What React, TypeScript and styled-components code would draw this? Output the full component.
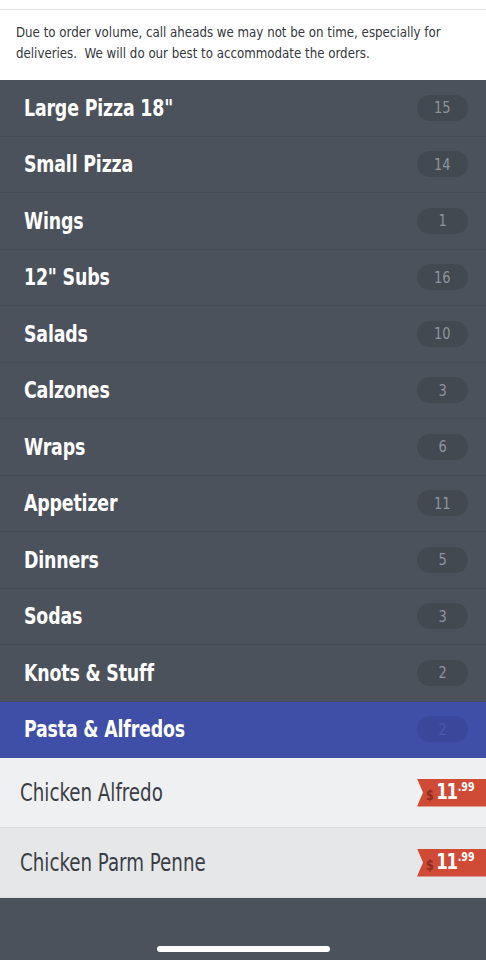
import React from "react";
import styled, { createGlobalStyle } from "styled-components";

const Global = createGlobalStyle`
  html, body { margin: 0; padding: 0; background: #4b525c; }
  #root { min-height: 960px; }
  * { box-sizing: border-box; }
`;

const FONT = `"DejaVu Sans Condensed", "DejaVu Sans", sans-serif`;

const Page = styled.div`
  width: 486px;
  min-height: 960px;
  display: flex;
  flex-direction: column;
  background: #4b525c;
  font-family: ${FONT};
`;

const TopStrip = styled.div`
  height: 10px;
  background: #fff;
  border-bottom: 1px solid #e4e4e6;
`;

const Notice = styled.div`
  background: #fff;
  padding: 12px 0 0 16px;
  height: 70px;
  overflow: hidden;
`;

const NoticeText = styled.p`
  margin: 0;
  width: 488px;
  font-size: 14px;
  line-height: 21px;
  color: #34373c;
  transform: scaleX(0.94);
  transform-origin: left top;
`;

const Category = styled.div<{ $active?: boolean }>`
  height: 56.5px;
  display: flex;
  align-items: center;
  justify-content: space-between;
  padding: 0 18px 0 24px;
  background: ${(p) => (p.$active ? "#3f4ea7" : "#4b525c")};
  border-bottom: 1px solid ${(p) => (p.$active ? "#3f4ea7" : "#464c55")};
`;

const CatName = styled.span`
  display: inline-block;
  color: #fff;
  font-size: 23px;
  font-weight: 700;
  letter-spacing: -0.2px;
  transform: scaleX(0.84);
  transform-origin: left center;
  white-space: nowrap;
`;

const Badge = styled.span<{ $active?: boolean }>`
  width: 51px;
  height: 26px;
  border-radius: 13px;
  display: flex;
  align-items: center;
  justify-content: center;
  background: ${(p) => (p.$active ? "#3a489c" : "#434950")};
  color: ${(p) => (p.$active ? "#4a59b0" : "#8e949c")};
`;

const BadgeNum = styled.span`
  display: inline-block;
  font-size: 16px;
  transform: scaleX(0.9);
`;

const Item = styled.div<{ $alt?: boolean }>`
  height: 70px;
  display: flex;
  align-items: center;
  justify-content: space-between;
  padding-left: 20px;
  background: ${(p) => (p.$alt ? "#e6e7e9" : "#eff0f2")};
  border-bottom: 1px solid #dddee0;
`;

const ItemName = styled.span`
  display: inline-block;
  font-size: 24px;
  color: #3a3e44;
  transform: scaleX(0.845);
  transform-origin: left center;
  white-space: nowrap;
`;

const PriceTag = styled.span`
  width: 69px;
  height: 28px;
  background: #d04b35;
  clip-path: polygon(0 0, 100% 0, 100% 100%, 0 100%, 6px 50%);
  display: flex;
  align-items: center;
  padding-left: 9px;
  color: #fff;
  font-weight: 700;
`;

const PriceInner = styled.span`
  display: flex;
  align-items: center;
  transform: scaleX(0.88);
  transform-origin: left center;
`;

const Dollar = styled.span`
  color: #8d2c1f;
  font-size: 14px;
  margin-top: 5px;
  margin-right: 3px;
`;

const Whole = styled.span`
  font-size: 21px;
  letter-spacing: -1.5px;
  line-height: 1;
`;

const Cents = styled.span`
  font-size: 12px;
  align-self: flex-start;
  margin-top: -2px;
  margin-left: 1px;
`;

const Footer = styled.div`
  flex: 1;
  display: flex;
  align-items: flex-end;
  justify-content: center;
  padding-bottom: 8px;
  background: #4b525c;
`;

const HomeBar = styled.div`
  width: 173px;
  height: 6px;
  border-radius: 3px;
  background: #fff;
`;

const categories: [string, number][] = [
  ["Large Pizza 18\"", 15],
  ["Small Pizza", 14],
  ["Wings", 1],
  ["12\" Subs", 16],
  ["Salads", 10],
  ["Calzones", 3],
  ["Wraps", 6],
  ["Appetizer", 11],
  ["Dinners", 5],
  ["Sodas", 3],
  ["Knots & Stuff", 2],
  ["Pasta & Alfredos", 2],
];

const items = ["Chicken Alfredo", "Chicken Parm Penne"];

export default function App() {
  return (
    <Page>
      <Global />
      <TopStrip />
      <Notice>
        <NoticeText>
          Due to order volume, call aheads we may not be on time, especially for
          deliveries.&nbsp; We will do our best to accommodate the orders.
        </NoticeText>
      </Notice>
      {categories.map(([name, n], i) => {
        const active = i === categories.length - 1;
        return (
          <Category key={name} $active={active}>
            <CatName>{name}</CatName>
            <Badge $active={active}>
              <BadgeNum>{n}</BadgeNum>
            </Badge>
          </Category>
        );
      })}
      {items.map((name, i) => (
        <Item key={name} $alt={i === 1}>
          <ItemName>{name}</ItemName>
          <PriceTag>
            <PriceInner>
              <Dollar>$</Dollar>
              <Whole>11</Whole>
              <Cents>.99</Cents>
            </PriceInner>
          </PriceTag>
        </Item>
      ))}
      <Footer>
        <HomeBar />
      </Footer>
    </Page>
  );
}
